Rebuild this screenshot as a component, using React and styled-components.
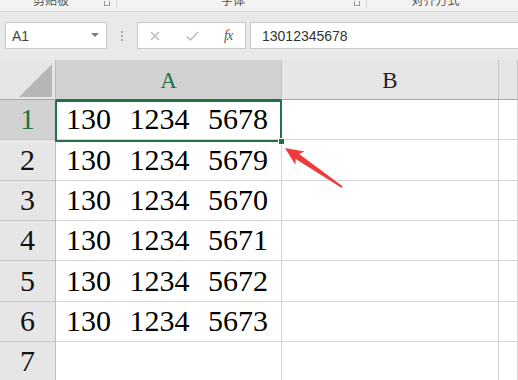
import React from "react";
import styled, { createGlobalStyle } from "styled-components";

const Global = createGlobalStyle`
  html, body { margin: 0; padding: 0; }
  body { width: 518px; height: 380px; overflow: hidden; background: #fff; }
  #root { width: 518px; height: 380px; }
`;

const Page = styled.div`
  width: 518px;
  height: 380px;
  overflow: hidden;
  display: flex;
  flex-direction: column;
  font-family: "Liberation Sans", "Noto Sans CJK SC", sans-serif;
`;

const RibbonBand = styled.div`
  height: 11px;
  flex: none;
  background: #f3f3f3;
  border-bottom: 1px solid #d6d6d6;
  display: flex;
  overflow: hidden;
`;

const RibbonGroup = styled.div`
  width: ${(p) => p.$w}px;
  flex: none;
  position: relative;
  display: flex;
  justify-content: center;
  border-right: ${(p) => (p.$sep ? "1px solid #d8d8d8" : "none")};
  box-sizing: border-box;
  height: 8px;
`;

const GroupLabel = styled.span`
  font-family: "Noto Sans CJK SC", sans-serif;
  font-size: 12px;
  line-height: 12px;
  margin-top: -6px;
  color: #555;
  margin-left: ${(p) => p.$shift || 0}px;
`;

const Launcher = styled.span`
  position: absolute;
  right: ${(p) => p.$r}px;
  top: 1px;
  width: 6px;
  height: 5px;
  border: 1px solid #9a9a9a;
  border-top: none;
  box-sizing: border-box;
`;

const FormulaBar = styled.div`
  height: 48px;
  flex: none;
  background: #e9e9e9;
  display: flex;
  align-items: flex-start;
  padding-top: 10px;
  box-sizing: border-box;
`;

const NameBox = styled.div`
  margin-left: 5px;
  width: 102px;
  height: 27px;
  box-sizing: border-box;
  background: #fff;
  border: 1px solid #c9c9c9;
  display: flex;
  align-items: center;
  justify-content: space-between;
  padding: 0 7px 0 6px;
  font-size: 14px;
  color: #444;
`;

const Caret = styled.span`
  width: 0;
  height: 0;
  border-left: 4px solid transparent;
  border-right: 4px solid transparent;
  border-top: 4px solid #7a7a7a;
  margin-top: -2px;
`;

const Grip = styled.div`
  width: 30px;
  height: 27px;
  display: flex;
  flex-direction: column;
  align-items: center;
  justify-content: center;
  gap: 2px;
`;

const Dot = styled.span`
  width: 2px;
  height: 2px;
  background: #a8a8a8;
`;

const FuncBox = styled.div`
  width: 109px;
  height: 27px;
  box-sizing: border-box;
  background: #fff;
  border: 1px solid #c9c9c9;
  display: flex;
  align-items: center;
  padding-left: 12px;
  gap: 0;
`;

const FuncBtn = styled.span`
  width: ${(p) => p.$w}px;
  display: flex;
  align-items: center;
  justify-content: flex-start;
`;

const Fx = styled.span`
  font-family: "Liberation Serif", serif;
  font-style: italic;
  font-size: 14px;
  color: #555;
  letter-spacing: -1px;
`;

const FormulaInput = styled.div`
  margin-left: 4px;
  flex: 1;
  height: 27px;
  box-sizing: border-box;
  background: #fff;
  border: 1px solid #c9c9c9;
  border-right: none;
  display: flex;
  align-items: center;
  padding-left: 11px;
  font-size: 14px;
  color: #333;
`;

const Sheet = styled.div`
  position: relative;
  flex: 1;
  display: grid;
  grid-template-columns: 56px 226px 217px 1fr;
  grid-template-rows: 40px repeat(7, 40.33px);
  background: #fff;
`;

const Corner = styled.div`
  background: #e6e6e6;
  border-right: 1px solid #bdbdbd;
  border-bottom: 1px solid #a8a8a8;
  box-sizing: border-box;
  position: relative;
`;

const ColHead = styled.div`
  background: ${(p) => (p.$sel ? "#d2d2d2" : "#e6e6e6")};
  color: ${(p) => (p.$sel ? "#217346" : "#222")};
  border-right: 1px solid #c4c4c4;
  border-bottom: 1px solid ${(p) => (p.$sel ? "#217346" : "#a8a8a8")};
  box-sizing: border-box;
  display: flex;
  justify-content: center;
  align-items: flex-end;
  padding-bottom: 4px;
  font-family: "Liberation Serif", serif;
  font-size: 23px;
  line-height: 28px;
`;

const RowHead = styled.div`
  background: ${(p) => (p.$sel ? "#d2d2d2" : "#e6e6e6")};
  color: ${(p) => (p.$sel ? "#217346" : "#111")};
  border-right: 1px solid ${(p) => (p.$sel ? "#217346" : "#bdbdbd")};
  border-bottom: 1px solid #c8c8c8;
  box-sizing: border-box;
  display: flex;
  justify-content: center;
  align-items: flex-end;
  padding-bottom: 3px;
  font-family: "Liberation Serif", serif;
  font-size: 30px;
  line-height: 34px;
`;

const Cell = styled.div`
  border-right: 1px solid #d4d4d4;
  border-bottom: 1px solid #d4d4d4;
  box-sizing: border-box;
  display: flex;
  align-items: flex-end;
  padding: 0 0 3px 10px;
  font-family: "Liberation Serif", serif;
  font-size: 30px;
  line-height: 34px;
  color: #000;
  white-space: pre;
  word-spacing: 11px;
`;

const Selection = styled.div`
  position: absolute;
  left: 55px;
  top: 40px;
  width: 227px;
  height: 42px;
  border: 2px solid #217346;
  box-sizing: border-box;
  pointer-events: none;
`;

const Handle = styled.div`
  position: absolute;
  left: 278px;
  top: 78px;
  width: 7px;
  height: 7px;
  background: #217346;
  border: 1px solid #fff;
  box-sizing: border-box;
`;

const ArrowLayer = styled.svg`
  position: absolute;
  left: 0;
  top: 0;
  width: 518px;
  height: 320px;
  pointer-events: none;
`;

const numbers = [
  "130 1234 5678",
  "130 1234 5679",
  "130 1234 5670",
  "130 1234 5671",
  "130 1234 5672",
  "130 1234 5673",
  "",
];

export default function App() {
  return (
    <Page>
      <Global />
      <RibbonBand>
        <RibbonGroup $w={117} $sep>
          <GroupLabel $shift={-14}>剪贴板</GroupLabel>
          <Launcher $r={6} />
        </RibbonGroup>
        <RibbonGroup $w={250} $sep>
          <GroupLabel $shift={-17}>字体</GroupLabel>
          <Launcher $r={6} />
        </RibbonGroup>
        <RibbonGroup $w={151}>
          <GroupLabel $shift={-14}>对齐方式</GroupLabel>
        </RibbonGroup>
      </RibbonBand>
      <FormulaBar>
        <NameBox>
          <span>A1</span>
          <Caret />
        </NameBox>
        <Grip>
          <Dot />
          <Dot />
          <Dot />
        </Grip>
        <FuncBox>
          <FuncBtn $w={36}>
            <svg width="10" height="10" viewBox="0 0 10 10">
              <path d="M1 1L9 9M9 1L1 9" stroke="#b8b8b8" strokeWidth="1.3" />
            </svg>
          </FuncBtn>
          <FuncBtn $w={38}>
            <svg width="13" height="10" viewBox="0 0 13 10">
              <path d="M1 5.5L4.5 9L12 1" stroke="#b8b8b8" strokeWidth="1.4" fill="none" />
            </svg>
          </FuncBtn>
          <FuncBtn $w={20}>
            <Fx>fx</Fx>
          </FuncBtn>
        </FuncBox>
        <FormulaInput>13012345678</FormulaInput>
      </FormulaBar>
      <Sheet>
        <Corner>
          <svg width="56" height="40" viewBox="0 0 56 40" style={{ position: "absolute", left: 0, top: 0 }}>
            <polygon points="19,37 52,4 52,37" fill="#b6b6b6" />
          </svg>
        </Corner>
        <ColHead $sel>A</ColHead>
        <ColHead>B</ColHead>
        <ColHead />
        {numbers.map((n, i) => (
          <React.Fragment key={i}>
            <RowHead $sel={i === 0}>{i + 1}</RowHead>
            <Cell>{n}</Cell>
            <Cell />
            <Cell />
          </React.Fragment>
        ))}
        <Selection />
        <Handle />
        <ArrowLayer viewBox="0 0 518 320">
          <polygon
            points="285,88 304.5,91.5 299.1,94 342.6,126.2 341.4,127.8 295.7,99 295.4,104.8"
            fill="#f0393a"
          />
        </ArrowLayer>
      </Sheet>
    </Page>
  );
}
